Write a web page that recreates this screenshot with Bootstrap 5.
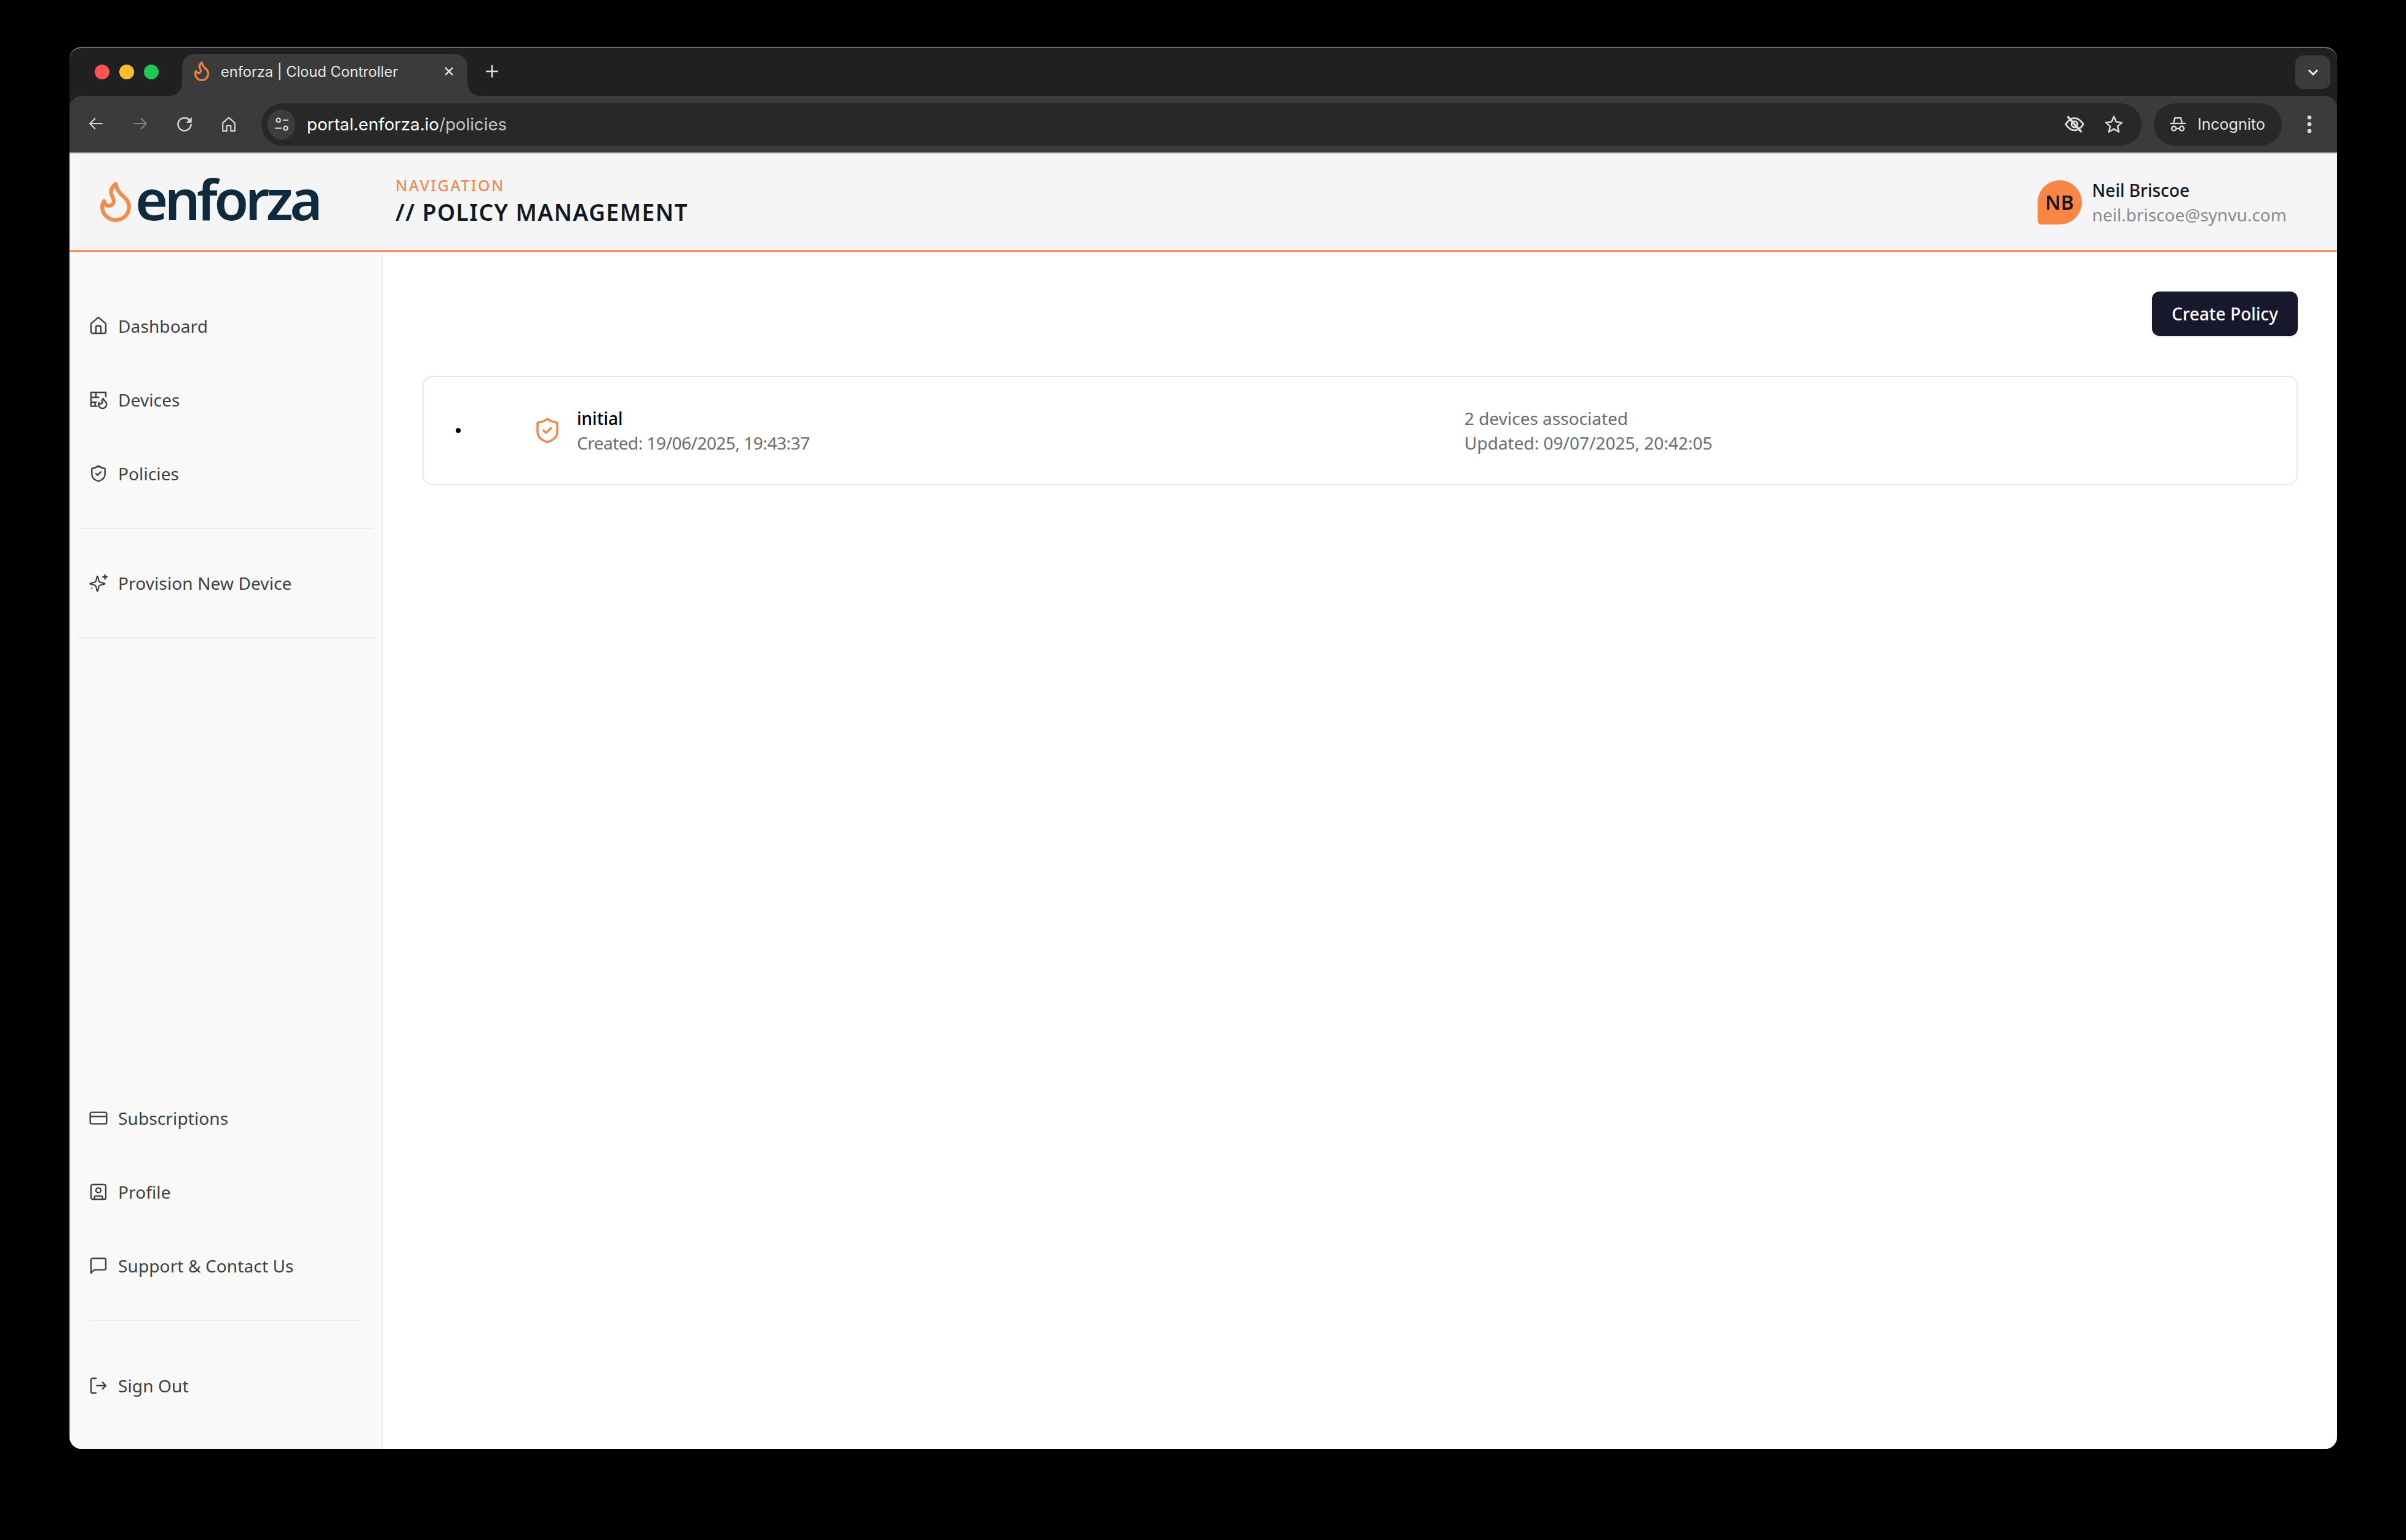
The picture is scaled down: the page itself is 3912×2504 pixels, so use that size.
<!doctype html>
<html lang="en"><head><meta charset="utf-8"><title>enforza | Cloud Controller</title>
<link href="https://cdn.jsdelivr.net/npm/bootstrap@5.3.0/dist/css/bootstrap.min.css" rel="stylesheet">
<style>
html,body{height:100%;background:#000;overflow:hidden}
body{padding:76px 112px 148px 113px;font-family:"Noto Sans",sans-serif;color:#101828}
.win{height:100%;border-radius:20px;overflow:hidden;background:#fff;border-top:2px solid #6a6a6a}
.strip{height:78px;background:#202020;padding-top:10px;position:relative}
.lights{width:183px;padding-left:41px;gap:16px;height:58px}
.lights i{width:24px;height:24px;border-radius:50%;display:block}
.tabx{width:464px;height:68px;background:#3b3b3b;border-radius:20px 20px 0 0;position:relative;font:400 23.6px Inter,sans-serif;color:#e8e8e8;padding:0 22px 12px 20px}
.tabx:before,.tabx:after{content:"";position:absolute;bottom:0;width:20px;height:20px}
.tabx:before{left:-20px;background:radial-gradient(circle at 0 0,#202020 19.5px,#3b3b3b 20px)}
.tabx:after{right:-20px;background:radial-gradient(circle at 100% 0,#202020 19.5px,#3b3b3b 20px)}
.tabtitle{margin-left:19px}
.plusx{margin-left:29px;margin-top:-12px;color:#ddd}
.chev{width:57px;height:55px;border-radius:14px;background:#3b3b3b;margin-right:11px;margin-top:2px}
.bar{height:94px;background:#3b3b3b;border-radius:20px 20px 0 0;border-bottom:2px solid #d8d8d8;position:relative}
.navic{width:72px;display:flex;justify-content:center;color:#d6d6d6}
.navic.dim{color:#858585}
.navics{padding-left:7px;margin-right:17px}
.url{width:3058px;height:69px;border-radius:35px;background:#282828;font:400 27.7px Inter,sans-serif;color:#fff;padding:0 30px 0 10px;margin-left:0}
.siteinfo{width:45px;height:49px;border-radius:50%;background:#3d3d3d;color:#ddd;margin-right:19px}
.url .path{color:#c4c4c4}
.incog{width:208px;height:69px;border-radius:35px;background:#282828;margin-left:20px;font:400 25px Inter,sans-serif;color:#e4e4e4;padding-left:25px;gap:18px}
.kebab{width:90px;color:#ddd}
.app-head{height:160px;background:#f5f5f5;border-bottom:3px solid #ef8a4f;padding:0 82px 0 50px}
.logo{width:480px;gap:7px}
.wordmark{font:600 91px/1 "Noto Sans",sans-serif;letter-spacing:-5.6px;color:#0f2a3d;margin-top:-10px}
.hd-titles{padding-bottom:4px}
.eyebrow{font-size:25px;font-weight:500;letter-spacing:2.4px;color:#f08a50;line-height:32px;margin-bottom:4px}
.ptitle{font-size:37px;font-weight:600;letter-spacing:1.5px;color:#101828;line-height:48px}
.avatar{width:72px;height:72px;border-radius:36px 36px 36px 6px;background:#fb8544;font-size:32px;font-weight:600;color:#14141f;margin-right:17px}
.uname{font-size:28px;font-weight:500;line-height:40px;color:#101828}
.umail{font-size:28px;line-height:40px;color:#8a8a8f}
.side{width:510px;background:#f9f9f9;border-right:2px solid #ececec;padding:60px 0 43px}
.sitem{height:120px;padding-left:31px;gap:16px;font-size:28px;letter-spacing:.12px;color:#3b3f46;text-decoration:none}
.sitem svg{width:32px;height:32px;flex:none}
.rule1{height:2px;background:#ebebeb;margin:28px 14px 28px 15px}
.rule2{height:2px;background:#ebebeb;margin:28px 32px 45px 31px}
.mainx{padding:64px 64px;background:#fff}
.btnx{background:#18182d;color:#fff;font-size:28px;font-weight:500;border-radius:12px;width:237px;height:72px;padding:0;border:0;box-shadow:0 2px 2px rgba(0,0,0,.1)}
.btnx:hover{background:#18182d;color:#fff}
.polrow{margin-top:65px;height:178px;border:2px solid #e8e8e8;border-radius:16px;padding-left:52px}
.dot{width:8px;height:8px;border-radius:50%;background:#000;margin-right:117px}
.pcol{width:1515px;gap:24px}
.pname{font-size:28px;line-height:40px;font-weight:500;color:#000}
.pmeta{font-size:28px;line-height:40px;color:#6b6b70}
.ptight{letter-spacing:-.5px}
</style></head>
<body>
<div class="win d-flex flex-column">
  <div class="strip d-flex flex-shrink-0">
    <div class="lights d-flex align-items-center"><i style="background:#ff5257"></i><i style="background:#ffbd2e"></i><i style="background:#20c755"></i></div>
    <div class="tabx d-flex align-items-center">
      <svg width="24" height="32" viewBox="4 2 16 21" preserveAspectRatio="none" fill="none" stroke="#ef7f3f" stroke-width="2.2" stroke-linejoin="round"><path d="M8.5 14.5A2.5 2.5 0 0 0 11 12c0-1.38-.5-2-1-3-1.072-2.143-.224-4.054 2-6 .5 2.5 2 4.9 4 6.5 2 1.6 3 3.5 3 5.5a7 7 0 1 1-14 0c0-1.153.433-2.294 1-3a2.5 2.5 0 0 0 2.5 2.5z"/></svg>
      <span class="tabtitle flex-grow-1">enforza | Cloud Controller</span>
      <svg width="16" height="16" viewBox="0 0 16 16" stroke="#eee" stroke-width="2.4"><path d="M2 2l12 12M14 2L2 14"/></svg>
    </div>
    <div class="plusx d-flex align-items-center"><svg width="22" height="22" viewBox="0 0 22 22" stroke="#ddd" stroke-width="2.6"><path d="M11 1v20M1 11h20"/></svg></div>
    <div class="flex-grow-1"></div>
    <div class="chev d-flex align-items-center justify-content-center"><svg width="18" height="12" viewBox="0 0 18 12" fill="none" stroke="#eee" stroke-width="3"><path d="M2 2l7 7 7-7"/></svg></div>
  </div>
  <div class="flex-shrink-0" style="background:#202020">
  <div class="bar d-flex align-items-center">
    <div class="navics d-flex">
      <span class="navic"><svg width="26" height="26" viewBox="0 0 24 24" fill="none" stroke="currentColor" stroke-width="2"><path d="M22 12H3M11 4l-8 8 8 8"/></svg></span>
      <span class="navic dim"><svg width="26" height="26" viewBox="0 0 24 24" fill="none" stroke="currentColor" stroke-width="2"><path d="M2 12h19M13 4l8 8-8 8"/></svg></span>
      <span class="navic"><svg width="28" height="28" viewBox="0 0 24 24" fill="none" stroke="currentColor" stroke-width="2.2"><path d="M21 12a9 9 0 1 1-2.800-6.500L21 8"/><path d="M22 2v8h-8z" fill="currentColor" stroke="none"/></svg></span>
      <span class="navic"><svg width="26" height="28" viewBox="0 0 24 24" fill="none" stroke="currentColor" stroke-width="2"><path d="M3 22V10l9-8 9 8v12h-6v-8H9v8z"/></svg></span>
    </div>
    <div class="url d-flex align-items-center">
      <span class="siteinfo d-flex align-items-center justify-content-center"><svg width="26" height="26" viewBox="0 0 24 24" fill="none" stroke="currentColor" stroke-width="2"><circle cx="7" cy="6" r="3"/><path d="M14 6h8M2 18h10"/><circle cx="18" cy="18" r="3"/></svg></span>
      <span class="flex-grow-1">portal.enforza.io<span class="path">/policies</span></span>
      <svg class="me-4" width="34" height="34" viewBox="0 0 24 24" fill="none" stroke="#ddd" stroke-width="2"><path d="M2 12s4-7 10-7 10 7 10 7-4 7-10 7-10-7-10-7z"/><circle cx="12" cy="12" r="3.5"/><path d="M4 3l16 18" stroke-width="2.4"/></svg>
      <svg class="ms-2" width="30" height="30" viewBox="0 0 24 24" fill="none" stroke="#ddd" stroke-width="2" stroke-linejoin="round"><path d="M12 2l3 7 7.5.7-5.7 5 1.7 7.3-6.500-3.900L5.500 22l1.700-7.300-5.700-5L9 9z"/></svg>
    </div>
    <div class="incog d-flex align-items-center">
      <svg width="28" height="28" viewBox="0 0 24 24" fill="none" stroke="#ddd" stroke-width="2"><path d="M6 10l2-7h8l2 7M1 11h22"/><circle cx="6.500" cy="18" r="3"/><circle cx="17.500" cy="18" r="3"/><path d="M9.500 18h5"/></svg>
      <span>Incognito</span>
    </div>
    <div class="kebab d-flex justify-content-center"><svg width="8" height="30" viewBox="0 0 8 30" fill="#ddd"><circle cx="4" cy="4" r="3.300"/><circle cx="4" cy="15" r="3.300"/><circle cx="4" cy="26" r="3.300"/></svg></div>
  </div></div>

  <header class="app-head d-flex align-items-center flex-shrink-0">
    <div class="logo d-flex align-items-center">
      <svg width="50" height="65" viewBox="4 2 16 21" preserveAspectRatio="none" fill="none" stroke="#f58a4b" stroke-width="2" stroke-linejoin="round"><path d="M8.500 14.500A2.500 2.500 0 0 0 11 12c0-1.380-.5-2-1-3-1.072-2.143-.224-4.054 2-6 .5 2.500 2 4.900 4 6.500 2 1.600 3 3.500 3 5.500a7 7 0 1 1-14 0c0-1.153.433-2.294 1-3a2.500 2.500 0 0 0 2.500 2.500z"/></svg>
      <span class="wordmark">enforza</span>
    </div>
    <div class="flex-grow-1 hd-titles">
      <div class="eyebrow">NAVIGATION</div>
      <div class="ptitle">// POLICY MANAGEMENT</div>
    </div>
    <div class="avatar d-flex align-items-center justify-content-center">NB</div>
    <div><div class="uname">Neil Briscoe</div><div class="umail">neil.briscoe@synvu.com</div></div>
  </header>

  <div class="d-flex flex-grow-1" style="min-height:0">
    <aside class="side d-flex flex-column flex-shrink-0">
      <a class="sitem d-flex align-items-center" href="#"><svg viewBox="0 0 24 24" fill="none" stroke="currentColor" stroke-width="1.8" stroke-linejoin="round"><path d="M3 10a2 2 0 0 1 .709-1.528l7-5.999a2 2 0 0 1 2.582 0l7 5.999A2 2 0 0 1 21 10v9a2 2 0 0 1-2 2H5a2 2 0 0 1-2-2z"/><path d="M15 21v-8a1 1 0 0 0-1-1h-4a1 1 0 0 0-1 1v8"/></svg>Dashboard</a>
      <a class="sitem d-flex align-items-center" href="#"><svg viewBox="0 0 24 24" fill="none" stroke="currentColor" stroke-width="1.8" stroke-linejoin="round"><path d="M11 20H3V3h18v6"/><path d="M3 9h10M9 3v6M3 15h7M8 15v5"/><path d="M15.500 16.500a1.500 1.500 0 0 0 1.500-1.500c0-1-.6-1.400-.6-2 0-1 .6-1.800 1.600-2.500.300 1.500 1 2.500 2 3.300s2 2.200 2 3.700a5 5 0 1 1-10 0c0-.7.300-1.400.7-1.800a1.500 1.500 0 0 0 2.800.800z"/></svg>Devices</a>
      <a class="sitem d-flex align-items-center" href="#"><svg viewBox="0 0 24 24" fill="none" stroke="currentColor" stroke-width="1.8" stroke-linejoin="round" stroke-linecap="round"><path d="M12 2.600c2 1.600 4.600 2.700 7.400 2.900a.7.7 0 0 1 .6.7V13c0 4.500-3.500 7-8 8.400C7.500 20 4 17.500 4 13V6.200a.7.7 0 0 1 .6-.7C7.400 5.300 10 4.200 12 2.600z"/><path d="M9 12l2 2 4-4"/></svg>Policies</a>
      <div class="rule1"></div>
      <a class="sitem d-flex align-items-center" href="#"><svg viewBox="0 0 24 24" fill="none" stroke="currentColor" stroke-width="1.8" stroke-linejoin="round" stroke-linecap="round"><path d="M9.937 15.500A2 2 0 0 0 8.500 14.063l-6.135-1.582a.5.5 0 0 1 0-.962L8.500 9.936A2 2 0 0 0 9.937 8.500l1.582-6.135a.5.5 0 0 1 .963 0L14.063 8.500A2 2 0 0 0 15.500 9.937l6.135 1.581a.5.5 0 0 1 0 .964L15.500 14.063a2 2 0 0 0-1.437 1.437l-1.582 6.135a.5.5 0 0 1-.963 0z" transform="translate(0 2) scale(.9)"/><path d="M20 2v5M17.500 4.500h5M4 18.500h.01"/></svg>Provision New Device</a>
      <div class="rule1"></div>
      <div class="flex-grow-1"></div>
      <a class="sitem d-flex align-items-center" href="#"><svg viewBox="0 0 24 24" fill="none" stroke="currentColor" stroke-width="1.8"><rect x="2" y="5" width="20" height="14" rx="2"/><path d="M2 10h20"/></svg>Subscriptions</a>
      <a class="sitem d-flex align-items-center" href="#"><svg viewBox="0 0 24 24" fill="none" stroke="currentColor" stroke-width="1.8"><rect x="3" y="3" width="18" height="18" rx="2"/><circle cx="12" cy="10" r="3"/><path d="M7 21v-2a2 2 0 0 1 2-2h6a2 2 0 0 1 2 2v2"/></svg>Profile</a>
      <a class="sitem d-flex align-items-center" href="#"><svg viewBox="0 0 24 24" fill="none" stroke="currentColor" stroke-width="1.8" stroke-linejoin="round"><path d="M21 15a2 2 0 0 1-2 2H7l-4 4V5a2 2 0 0 1 2-2h14a2 2 0 0 1 2 2z"/></svg>Support &amp; Contact Us</a>
      <div class="rule2"></div>
      <a class="sitem d-flex align-items-center" href="#"><svg viewBox="0 0 24 24" fill="none" stroke="currentColor" stroke-width="1.8" stroke-linejoin="round" stroke-linecap="round"><path d="M9 3H5a2 2 0 0 0-2 2v14a2 2 0 0 0 2 2h4"/><path d="M10 12h11M17 8l4 4-4 4"/></svg>Sign Out</a>
    </aside>
    <main class="mainx flex-grow-1">
      <div class="d-flex justify-content-end"><button class="btn btnx" type="button">Create Policy</button></div>
      <div class="polrow d-flex align-items-center">
        <span class="dot"></span>
        <div class="pcol d-flex align-items-center">
          <svg width="48" height="48" viewBox="0 0 24 24" fill="none" stroke="#f08a50" stroke-width="1.8" stroke-linejoin="round" stroke-linecap="round"><path d="M12 2.600c2 1.600 4.600 2.700 7.400 2.900a.7.7 0 0 1 .6.7V13c0 4.500-3.500 7-8 8.400C7.500 20 4 17.500 4 13V6.200a.7.7 0 0 1 .6-.7C7.400 5.300 10 4.200 12 2.600z"/><path d="M9 12l2 2 4-4"/></svg>
          <div><div class="pname">initial</div><div class="pmeta ptight">Created: 19/06/2025, 19:43:37</div></div>
        </div>
        <div><div class="pmeta">2 devices associated</div><div class="pmeta">Updated: 09/07/2025, 20:42:05</div></div>
      </div>
    </main>
  </div>
</div>
</body></html>
